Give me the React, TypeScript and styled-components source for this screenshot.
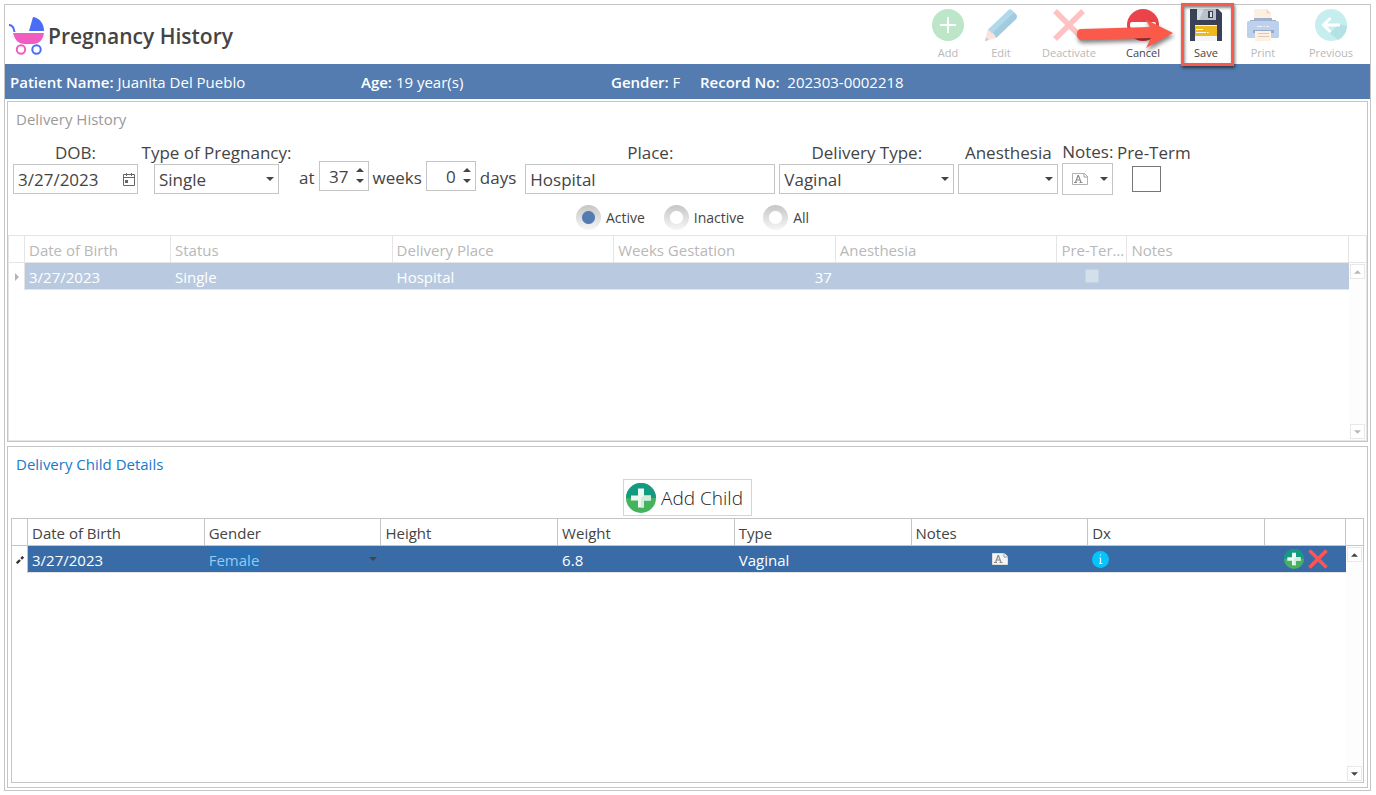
import React from "react";
import styled, { createGlobalStyle, css } from "styled-components";

const GlobalStyle = createGlobalStyle`
  * { box-sizing: border-box; }
  body {
    margin: 0;
    background: #fff;
    color: #444;
    font-family: "Open Sans", "Noto Sans", sans-serif;
    font-size: 15px;
  }
  button, input, select { font: inherit; color: inherit; }
`;

const Frame = styled.main`
  display: flex;
  flex-direction: column;
  min-height: calc(100vh - 8px);
  margin: 4px 5px 4px 4px;
  border: 1px solid #c5c5c5;
`;

/* ---------- header ---------- */

const Header = styled.header`
  display: flex;
  justify-content: space-between;
  height: 59px;
`;

const Brand = styled.div`
  display: flex;
  align-items: center;
  gap: 3px;
  padding: 3px 0 0 4px;
`;

const Title = styled.h1`
  margin: 0;
  font-size: 21px;
  line-height: 28px;
  font-weight: 600;
  white-space: nowrap;
`;

const Toolbar = styled.nav`
  display: flex;
  padding-right: 1px;
`;

const ToolButton = styled.button<{ $width: number }>`
  position: relative;
  display: flex;
  flex-direction: column;
  align-items: center;
  gap: 4px;
  width: ${(p) => p.$width}px;
  padding: 4px 0 0;
  border: 0;
  background: none;
  color: #444;
  font-size: 11px;
  line-height: 16px;
  &:disabled { color: #b8b8b8; }
  svg { display: block; flex: none; }
`;

const Marker = styled.span`
  position: absolute;
  inset: -2px -1px -2px 2px;
  border: 3px solid #f95a4c;
  box-shadow: 1px 2px 3px rgba(0, 0, 0, 0.55), inset 1px 2px 3px rgba(0, 0, 0, 0.45);
`;

const Pointer = styled.span`
  position: absolute;
  top: 9px;
  left: -105px;
  z-index: 1;
  filter: drop-shadow(1px 3px 2px rgba(0, 0, 0, 0.5));
`;

const PatientBar = styled.section`
  display: grid;
  grid-template-columns: 351px 250px 89px 1fr;
  height: 35px;
  padding-left: 5px;
  background: #547cb0;
  color: #fff;
  line-height: 36px;
  white-space: nowrap;
  b { font-weight: 600; }
`;

/* ---------- panels ---------- */

const Panels = styled.div`
  display: flex;
  flex: 1;
  flex-direction: column;
  gap: 4px;
  padding: 2px;
`;

const Panel = styled.section`
  display: flex;
  flex: 1 1 2px;
  flex-direction: column;
  border: 1px solid #c5c5c5;
  &:last-child { flex-basis: 3px; }
`;

const PanelTitle = styled.h2<{ $active?: boolean }>`
  margin: 5px 8px 0;
  font-size: 15px;
  font-weight: 400;
  line-height: 24px;
  color: ${(p) => (p.$active ? "#1979ca" : "#9a9a9a")};
`;

/* ---------- delivery form ---------- */

const Form = styled.form`
  display: flex;
  align-items: center;
  gap: 4px;
  margin-top: 10px;
  padding-left: 5px;
  font-size: 17px;
`;

const Field = styled.div<{ $width: number }>`
  display: flex;
  flex: none;
  flex-direction: column;
  align-items: center;
  width: ${(p) => p.$width}px;
  label { line-height: 22px; white-space: nowrap; }
`;

const box = css`
  display: flex;
  align-items: center;
  border: 1px solid #c5c5c5;
  background: #fff;
`;

const Box = styled.div<{ $width: number; $height?: number }>`
  ${box}
  position: relative;
  width: ${(p) => p.$width}px;
  height: ${(p) => p.$height ?? 30}px;
`;

const TextInput = styled.input<{ $right?: boolean }>`
  flex: 1;
  min-width: 0;
  height: 100%;
  padding: 0 0 0 4px;
  border: 0;
  outline: 0;
  background: none;
  text-align: ${(p) => (p.$right ? "right" : "left")};
`;

const SpinInput = styled(TextInput)`
  padding-top: 2px;
`;

const Select = styled.select`
  flex: 1;
  min-width: 0;
  height: 100%;
  padding: 0 20px 0 4px;
  border: 0;
  outline: 0;
  appearance: none;
  background: none;
`;

const CaretSlot = styled.span`
  position: absolute;
  right: 4px;
  display: flex;
  pointer-events: none;
`;

const IconButton = styled.button`
  display: flex;
  align-items: center;
  justify-content: center;
  padding: 0;
  border: 0;
  background: none;
`;

const DateButton = styled(IconButton)`
  margin-right: 2px;
`;

const NotesButton = styled.button`
  ${box}
  justify-content: space-between;
  width: 51px;
  height: 32px;
  padding: 0 4px 0 9px;
`;

const Gestation = styled.div`
  display: flex;
  align-items: center;
  gap: 4px;
  padding: 15px 5px 0 4px;
`;

const Unit = styled.span`
  padding-top: 4px;
  line-height: 26px;
`;

const SpinButtons = styled.span`
  display: flex;
  flex-direction: column;
  gap: 7px;
  padding: 0 4px 0 7px;
`;

const CheckSlot = styled.div`
  display: flex;
  align-items: center;
  align-self: flex-start;
  height: 30px;
  padding-left: 15px;
`;

const Checkbox = styled.input`
  width: 29px;
  height: 26px;
  margin: 0;
  appearance: none;
  border: 1px solid #777;
  background: #fff;
`;

const Filters = styled.fieldset`
  display: flex;
  justify-content: center;
  gap: 19px;
  margin: 10px 0 0;
  padding: 0 0 0 10px;
  border: 0;
  font-size: 14px;
`;

const RadioLabel = styled.label`
  display: flex;
  align-items: center;
  gap: 5px;
  height: 25px;
  line-height: 20px;
`;

const Radio = styled.input`
  width: 25px;
  height: 25px;
  margin: 0;
  appearance: none;
  border-radius: 50%;
  background:
    radial-gradient(circle, #fff 6px, transparent 7px),
    linear-gradient(#c6c6c6, #f6f6f6);
  &:checked {
    background:
      radial-gradient(circle, #547cb0 6px, transparent 7px),
      linear-gradient(#c6c6c6, #f6f6f6);
  }
`;

/* ---------- grids ---------- */

const Grid = styled.div<{ $muted?: boolean }>`
  --line: ${(p) => (p.$muted ? "#e5e5e5" : "#c5c5c5")};
  --text: ${(p) => (p.$muted ? "#b8b8b8" : "#444")};
  --row: ${(p) => (p.$muted ? "#b9cae0" : "#396ba6")};
  display: flex;
  flex: 1;
  margin: ${(p) => (p.$muted ? "5px 0 0" : "2px 3px 4px")};
  border: 1px solid var(--line);
`;

const TableArea = styled.div`
  flex: 1;
  min-width: 0;
`;

const Table = styled.table`
  width: 100%;
  table-layout: fixed;
  border-collapse: separate;
  border-spacing: 0;
`;

const Col = styled.col<{ $width?: number }>`
  width: ${(p) => (p.$width ? `${p.$width}px` : "auto")};
`;

const Th = styled.th`
  height: 27px;
  padding: 2px 0 0 4px;
  overflow: hidden;
  border-right: 1px solid var(--line);
  border-bottom: 1px solid var(--line);
  color: var(--text);
  font-weight: 400;
  line-height: 24px;
  text-align: left;
  text-overflow: ellipsis;
  white-space: nowrap;
`;

const Td = styled.td<{ $align?: "left" | "center" | "right" }>`
  height: 27px;
  padding: 2px 4px 0;
  border-bottom: 1px solid #e5e5e5;
  background: var(--row);
  color: #fff;
  line-height: 24px;
  text-align: ${(p) => p.$align ?? "left"};
`;

const IconCell = styled(Td)`
  padding-top: 0;
  svg { display: block; margin: ${(p) => (p.$align === "center" ? "0 auto" : "0")}; }
`;

const RowMark = styled.td`
  padding: 0;
  border-right: 1px solid var(--line);
  text-align: center;
  svg { display: block; margin: 0 auto; }
`;

const RowCheckbox = styled.input`
  display: block;
  width: 14px;
  height: 14px;
  margin: 0 auto;
  appearance: none;
  border: 1px solid #c4d3e3;
  background: #d3dfea;
`;

const GenderCell = styled.div`
  display: flex;
  align-items: center;
  justify-content: space-between;
  height: 22px;
`;

const GenderSelect = styled.select`
  height: 22px;
  padding: 0;
  border: 0;
  outline: 0;
  appearance: none;
  background: #286fb4;
  color: #9cc8ee;
`;

const RowActions = styled.div`
  display: flex;
  justify-content: flex-end;
  gap: 4px;
  padding-right: 14px;
`;

const ScrollBar = styled.div`
  display: flex;
  flex-direction: column;
  width: 17px;
`;

const ScrollHead = styled.div`
  height: 27px;
  border-bottom: 1px solid var(--line);
`;

const ScrollTrack = styled.div`
  display: flex;
  flex: 1;
  flex-direction: column;
  justify-content: space-between;
  padding: 1px;
  background: #fdfdfd;
`;

const ScrollButton = styled(IconButton)`
  height: 15px;
  border: 1px solid #e8e8e8;
  background: #fff;
`;

const AddChildButton = styled.button`
  display: flex;
  align-items: center;
  align-self: center;
  gap: 5px;
  height: 37px;
  margin-top: 3px;
  padding: 0 8px 0 2px;
  border: 1px solid #d4d4d4;
  background: #fff;
  font-size: 19px;
  font-weight: 300;
  color: #222;
`;

/* ---------- icons ---------- */

const Caret = ({ up, color = "#444", small }: { up?: boolean; color?: string; small?: boolean }) => (
  <svg width={small ? 7 : 8} height="4" viewBox="0 0 8 4" fill={color}>
    <path d={up ? "M0 4 L4 0 L8 4Z" : "M0 0 H8 L4 4Z"} />
  </svg>
);

const StrollerIcon = () => (
  <svg width="36" height="39" viewBox="0 0 36 39">
    <path d="M0 8 C4 8 5 11 5.500 15" fill="none" stroke="#4a6df5" strokeWidth="2" />
    <path d="M20 14 L24 0 C31 1 35 7 35 14Z" fill="#4a6df5" />
    <path d="M4 16 H35 C34 23 30 27 24 27 H16 C9 27 6 23 4 16Z" fill="#f15cc0" />
    <circle cx="12" cy="32.500" r="4.200" fill="none" stroke="#f15cc0" strokeWidth="2" />
    <circle cx="27.500" cy="32.500" r="4.200" fill="none" stroke="#4a6df5" strokeWidth="2" />
  </svg>
);

const AddIcon = () => (
  <svg width="32" height="32" viewBox="0 0 32 32">
    <circle cx="16" cy="16" r="16" fill="#bde5c8" />
    <path d="M16 8 V24 M8 16 H24" stroke="#fff" strokeWidth="2" />
  </svg>
);

const EditIcon = () => (
  <svg width="32" height="32" viewBox="0 0 32 32">
    <path d="M2.500 21 L23 1.500 Q25 -.5 27 1 L31.500 6 Q32.500 8 31 10 L11 29Z" fill="#b1d9ea" />
    <path d="M6.500 25 L29 3.500 L31.500 6 Q32.500 8 31 10 L11 29Z" fill="#a3cbe0" />
    <path d="M2.500 21 Q5 20.500 6 23.500 Q9.500 24 11 29 L0 32Z" fill="#fbe3dc" />
    <path d="M1 28.500 L3.800 31 L0 32Z" fill="#a9d3e6" />
  </svg>
);

const DeactivateIcon = () => (
  <svg width="32" height="32" viewBox="0 0 32 32">
    <path d="M2 2 L30 30 M30 2 L2 30" stroke="#ffc2c2" strokeWidth="5.500" />
  </svg>
);

const CancelIcon = () => (
  <svg width="32" height="32" viewBox="0 0 32 32">
    <circle cx="16" cy="16" r="16" fill="#ea4349" />
    <rect x="3" y="13" width="26" height="6" rx="2" fill="#fff" />
  </svg>
);

const SaveIcon = () => (
  <svg width="32" height="32" viewBox="0 0 32 32">
    <path d="M0 0 H28 L32 4 V32 H0Z" fill="#3a4157" />
    <path d="M7 0 H26 V11 H7Z" fill="#b9c2c9" />
    <path d="M7 0 H14 L9 11 H7Z" fill="#d6dde1" />
    <rect x="18" y="2" width="5" height="7" fill="#3a4157" />
    <rect x="20" y="3" width="2" height="5" fill="#e3e7ea" />
    <rect x="5" y="16" width="22" height="16" fill="#f3f4f4" />
    <rect x="5" y="17" width="22" height="10" fill="#edb91f" />
    <path d="M6 20.500 H13 M6 23.500 H16 M17 23.500 H18.500" stroke="#fff" strokeWidth="1" />
  </svg>
);

const PrintIcon = () => (
  <svg width="32" height="32" viewBox="0 0 32 32">
    <path d="M7 0 H20 L24 4 V12 H7Z" fill="#fdf0e2" />
    <path d="M19.500 0 V4.500 H24Z" fill="#efd8c4" />
    <path d="M3 11 H7 V9 H25 V11 H29 V13 H3Z" fill="#9db2cf" />
    <rect x="0" y="12" width="32" height="17" rx="1.500" fill="#bdd0ec" />
    <path d="M10 17.500 H15 M16.500 17.500 H18 M19.500 17.500 H22" stroke="#eef3fa" strokeWidth="1" />
    <rect x="6" y="21" width="21" height="3" fill="#98a9c6" />
    <path d="M8 22 H24 V32 H8Z" fill="#fdf0e2" />
    <path d="M11 24.500 H22 M11 27.500 H22" stroke="#dcc8bd" strokeWidth="1" />
  </svg>
);

const PreviousIcon = () => (
  <svg width="32" height="32" viewBox="0 0 32 32">
    <circle cx="16" cy="16" r="16" fill="#c6eeef" />
    <path d="M15 24 L23 31 A16 16 0 0 0 32 17 L24 15Z" fill="#b3e1e5" />
    <path d="M25 16 H9 M15.500 9 L8.500 16 L15.500 23" fill="none" stroke="#fff" strokeWidth="3" />
  </svg>
);

const PointerShape = styled.svg`
  display: block;
`;

const ArrowShape = () => (
  <PointerShape width="106" height="42" viewBox="0 0 106 42">
    <path
      d="M7 15 L76 13 L71 5 L99 19 L72 34 L77 24 L8 26 Q3 26 3 20 Q3 15 7 15Z"
      fill="#fb5a4b"
    />
  </PointerShape>
);

const CalendarIcon = () => (
  <svg width="12" height="13" viewBox="0 0 12 13" fill="none" stroke="#666">
    <path d="M.5 1.500 H11.500 V12.500 H.5Z M.5 4.500 H11.500 M3.500 0 V3 M8.500 0 V3" />
    <rect x="2" y="7" width="3" height="3" fill="#666" stroke="none" />
  </svg>
);

const NoteIcon = ({ filled }: { filled?: boolean }) => (
  <svg width="16" height="12" viewBox="0 0 16 12">
    <path
      d="M.5 .5 H12.500 L15.500 3.500 V11.500 H.5Z"
      fill={filled ? "#f4f4f4" : "#fff"}
      stroke={filled ? "#ddd" : "#b0b0b0"}
    />
    <path d="M12 0 V4 H16" fill="none" stroke="#a0a0a0" />
    <path
      d="M3.500 9.500 L6 2.500 H6.500 L9 9.500 M4.500 7 H8.500 M2 9.500 H5 M7.500 9.500 H10.500"
      fill="none"
      stroke="#8d8d8d"
      strokeWidth="1.200"
    />
  </svg>
);

const PlusBadge = ({ size }: { size: number }) => (
  <svg width={size} height={size} viewBox="0 0 30 30">
    <circle cx="15" cy="15" r="15" fill="#45b35d" />
    <path d="M0 15 A15 15 0 0 1 30 15Z" fill="#139a80" />
    <path d="M12 5.500 H18 V12.500 H25 V17.500 H18 V24.500 H12 V17.500 H5 V12.500 H12Z" fill="#ecf8f1" />
    <path d="M18 12.500 H25 V17.500 H18 V24.500 H15 V15Z" fill="#d2ecdc" />
  </svg>
);

const InfoIcon = () => (
  <svg width="17" height="17" viewBox="0 0 17 17">
    <circle cx="8.500" cy="8.500" r="8.500" fill="#06c4fa" />
    <path d="M7.500 7 H8.500 V12.500 M7 12.500 H10.500 M7.800 4 H9.200" fill="none" stroke="#e8faff" strokeWidth="1.200" />
  </svg>
);

const RemoveIcon = () => (
  <svg width="20" height="20" viewBox="0 0 20 20">
    <path d="M1.500 1.500 L18.500 18.500 M18.500 1.500 L1.500 18.500" stroke="#ff5454" strokeWidth="3.600" />
  </svg>
);

const CurrentRowIcon = () => (
  <svg width="4" height="8" viewBox="0 0 4 8">
    <path d="M0 0 L4 4 L0 8Z" fill="#b4b4b4" />
  </svg>
);

const PencilMark = () => (
  <svg width="8" height="8" viewBox="0 0 8 8" stroke="#333" strokeWidth="2.400">
    <path d="M.8 7.200 L4 4 M5.200 2.800 L7.200 .8" />
  </svg>
);

/* ---------- composition ---------- */

const tools = [
  { label: "Add", width: 46, icon: <AddIcon />, disabled: true },
  { label: "Edit", width: 60, icon: <EditIcon />, disabled: true },
  { label: "Deactivate", width: 76, icon: <DeactivateIcon />, disabled: true },
  { label: "Cancel", width: 72, icon: <CancelIcon /> },
  { label: "Save", width: 54, icon: <SaveIcon />, marked: true },
  { label: "Print", width: 60, icon: <PrintIcon />, disabled: true },
  { label: "Previous", width: 76, icon: <PreviousIcon />, disabled: true },
];

const Spinner = ({ label, value }: { label: string; value: string }) => (
  <Box $width={50}>
    <SpinInput aria-label={label} defaultValue={value} $right />
    <SpinButtons>
      <IconButton type="button" aria-label={`Increase ${label}`}><Caret up /></IconButton>
      <IconButton type="button" aria-label={`Decrease ${label}`}><Caret /></IconButton>
    </SpinButtons>
  </Box>
);

const DropDown = ({ id, width, value }: { id: string; width: number; value: string }) => (
  <Box $width={width}>
    <Select id={id} defaultValue={value}>
      <option>{value}</option>
    </Select>
    <CaretSlot><Caret /></CaretSlot>
  </Box>
);

const Scroll = ({ color }: { color: string }) => (
  <ScrollBar>
    <ScrollHead />
    <ScrollTrack>
      <ScrollButton type="button" aria-label="Scroll up"><Caret up small color={color} /></ScrollButton>
      <ScrollButton type="button" aria-label="Scroll down"><Caret small color={color} /></ScrollButton>
    </ScrollTrack>
  </ScrollBar>
);

const HeadRow = ({ titles }: { titles: string[] }) => (
  <thead>
    <tr>
      <Th as="td" />
      {titles.map((t, i) => <Th key={i} scope="col">{t}</Th>)}
    </tr>
  </thead>
);

export default function App() {
  return (
    <>
      <GlobalStyle />
      <Frame>
        <Header>
          <Brand>
            <StrollerIcon />
            <Title>Pregnancy History</Title>
          </Brand>
          <Toolbar>
            {tools.map((t) => (
              <ToolButton key={t.label} type="button" $width={t.width} disabled={t.disabled}>
                {t.icon}
                {t.label}
                {t.marked && <Marker />}
                {t.marked && <Pointer><ArrowShape /></Pointer>}
              </ToolButton>
            ))}
          </Toolbar>
        </Header>

        <PatientBar>
          <span><b>Patient Name:</b> Juanita Del Pueblo</span>
          <span><b>Age:</b> 19 year(s)</span>
          <span><b>Gender:</b> F</span>
          <span><b>Record No:</b>&nbsp; 202303-0002218</span>
        </PatientBar>

        <Panels>
          <Panel>
            <PanelTitle>Delivery History</PanelTitle>
            <Form>
              <Field $width={125}>
                <label htmlFor="dob">DOB:</label>
                <Box $width={125}>
                  <TextInput id="dob" defaultValue="3/27/2023" />
                  <DateButton type="button" aria-label="Open calendar"><CalendarIcon /></DateButton>
                </Box>
              </Field>
              <Field $width={149}>
                <label htmlFor="pregnancy">Type of Pregnancy:</label>
                <DropDown id="pregnancy" width={125} value="Single" />
              </Field>
              <Gestation>
                <Unit>at</Unit>
                <Spinner label="weeks" value="37" />
                <Unit>weeks</Unit>
                <Spinner label="days" value="0" />
                <Unit>days</Unit>
              </Gestation>
              <Field $width={250}>
                <label htmlFor="place">Place:</label>
                <Box $width={250}><TextInput id="place" defaultValue="Hospital" /></Box>
              </Field>
              <Field $width={175}>
                <label htmlFor="delivery">Delivery Type:</label>
                <DropDown id="delivery" width={175} value="Vaginal" />
              </Field>
              <Field $width={100}>
                <label htmlFor="anesthesia">Anesthesia</label>
                <DropDown id="anesthesia" width={100} value="" />
              </Field>
              <Field $width={51}>
                <label htmlFor="notes">Notes:</label>
                <NotesButton id="notes" type="button"><NoteIcon /><Caret /></NotesButton>
              </Field>
              <Field $width={73}>
                <label htmlFor="preterm">Pre-Term</label>
                <CheckSlot><Checkbox id="preterm" type="checkbox" /></CheckSlot>
              </Field>
            </Form>
            <Filters>
              <RadioLabel><Radio type="radio" name="status" defaultChecked />Active</RadioLabel>
              <RadioLabel><Radio type="radio" name="status" />Inactive</RadioLabel>
              <RadioLabel><Radio type="radio" name="status" />All</RadioLabel>
            </Filters>
            <Grid $muted>
              <TableArea>
                <Table>
                  <colgroup>
                    <Col $width={16} /><Col $width={146} /><Col /><Col /><Col /><Col /><Col $width={70} /><Col />
                  </colgroup>
                  <HeadRow
                    titles={["Date of Birth", "Status", "Delivery Place", "Weeks Gestation", "Anesthesia", "Pre-Term", "Notes"]}
                  />
                  <tbody>
                    <tr>
                      <RowMark><CurrentRowIcon /></RowMark>
                      <Td>3/27/2023</Td>
                      <Td>Single</Td>
                      <Td>Hospital</Td>
                      <Td $align="right">37</Td>
                      <Td />
                      <IconCell><RowCheckbox type="checkbox" aria-label="Pre-Term" disabled /></IconCell>
                      <Td />
                    </tr>
                  </tbody>
                </Table>
              </TableArea>
              <Scroll color="#b8b8b8" />
            </Grid>
          </Panel>

          <Panel>
            <PanelTitle $active>Delivery Child Details</PanelTitle>
            <AddChildButton type="button"><PlusBadge size={30} />Add Child</AddChildButton>
            <Grid>
              <TableArea>
                <Table>
                  <colgroup>
                    <Col $width={16} /><Col /><Col /><Col /><Col /><Col /><Col /><Col /><Col $width={81} />
                  </colgroup>
                  <HeadRow titles={["Date of Birth", "Gender", "Height", "Weight", "Type", "Notes", "Dx", ""]} />
                  <tbody>
                    <tr>
                      <RowMark><PencilMark /></RowMark>
                      <Td>3/27/2023</Td>
                      <IconCell>
                        <GenderCell>
                          <GenderSelect aria-label="Gender" defaultValue="Female">
                            <option>Female</option>
                          </GenderSelect>
                          <Caret />
                        </GenderCell>
                      </IconCell>
                      <Td />
                      <Td>6.8</Td>
                      <Td>Vaginal</Td>
                      <IconCell $align="center"><NoteIcon filled /></IconCell>
                      <IconCell><InfoIcon /></IconCell>
                      <IconCell>
                        <RowActions>
                          <IconButton type="button" aria-label="Add diagnosis"><PlusBadge size={20} /></IconButton>
                          <IconButton type="button" aria-label="Remove child"><RemoveIcon /></IconButton>
                        </RowActions>
                      </IconCell>
                    </tr>
                  </tbody>
                </Table>
              </TableArea>
              <Scroll color="#444" />
            </Grid>
          </Panel>
        </Panels>
      </Frame>
    </>
  );
}
